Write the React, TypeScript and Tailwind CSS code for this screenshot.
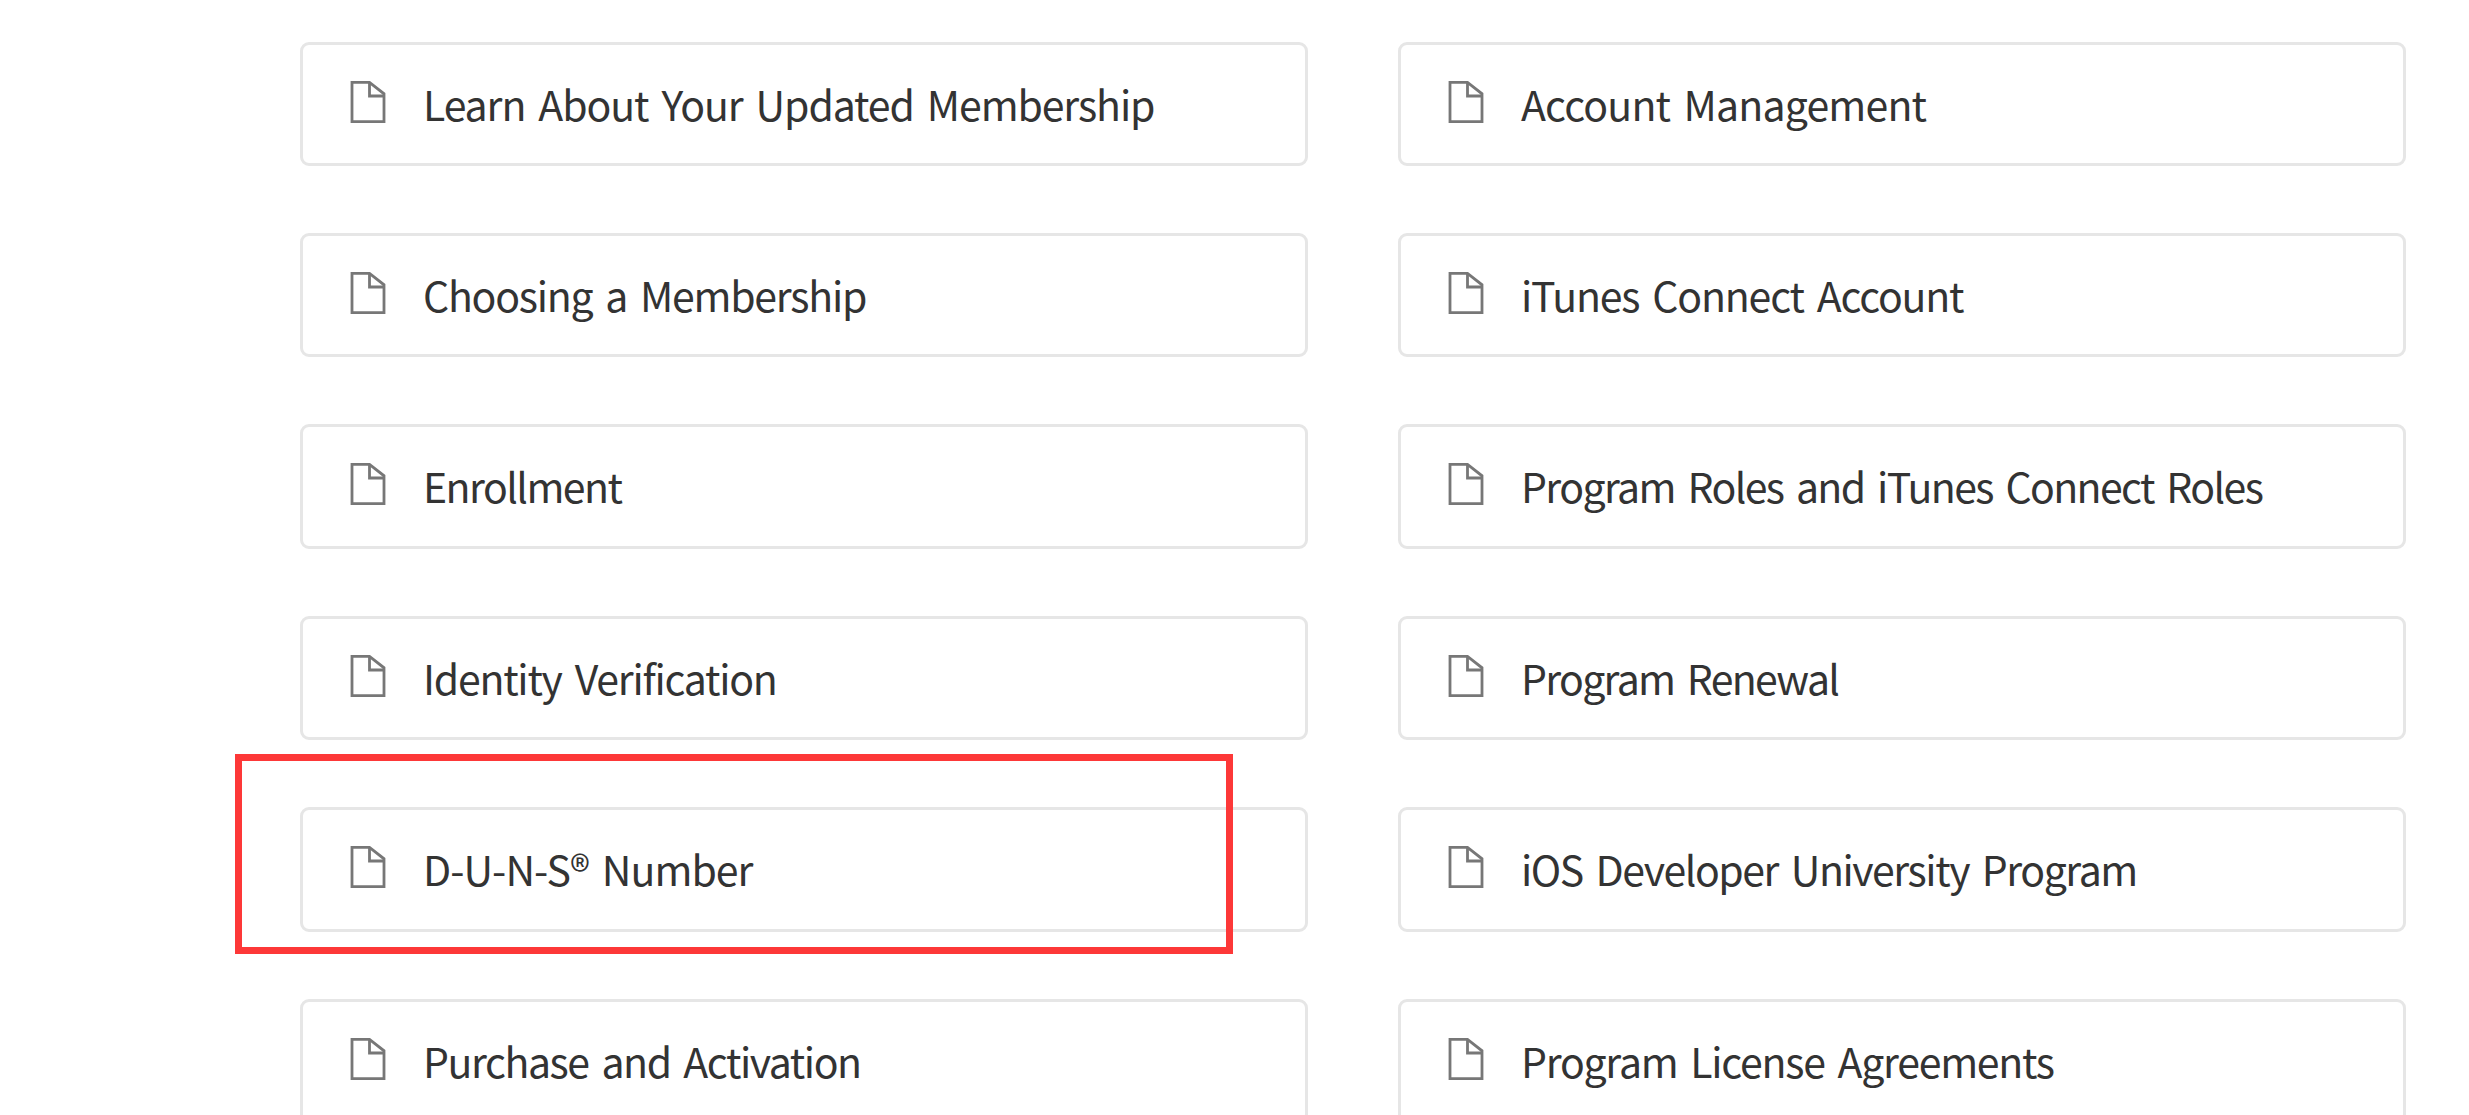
interface Topic {
  title: string;
  tracking: string;
}

const leftTopics: Topic[] = [
  { title: "Learn About Your Updated Membership", tracking: "tracking-[-1.1px]" },
  { title: "Choosing a Membership", tracking: "tracking-[-1.25px]" },
  { title: "Enrollment", tracking: "tracking-[-1.55px]" },
  { title: "Identity Verification", tracking: "tracking-[-1.25px]" },
  { title: "D-U-N-S® Number", tracking: "tracking-[-0.96px]" },
  { title: "Purchase and Activation", tracking: "tracking-[-1.43px]" },
];

const rightTopics: Topic[] = [
  { title: "Account Management", tracking: "tracking-[-0.82px]" },
  { title: "iTunes Connect Account", tracking: "tracking-[-1.19px]" },
  { title: "Program Roles and iTunes Connect Roles", tracking: "tracking-[-1.62px]" },
  { title: "Program Renewal", tracking: "tracking-[-1.7px]" },
  { title: "iOS Developer University Program", tracking: "tracking-[-1.45px]" },
  { title: "Program License Agreements", tracking: "tracking-[-1.26px]" },
];

function DocumentIcon() {
  return (
    <svg
      width="36"
      height="44"
      viewBox="0 0 36 44"
      fill="none"
      stroke="#777777"
      strokeWidth="2.8"
      className="shrink-0"
    >
      <path d="M2 2.3H19.5L34 13.8V41.6H2Z" />
      <path d="M19.5 2.3V16H34" />
    </svg>
  );
}

function TopicCard({ title, tracking }: Topic) {
  return (
    <a className="flex h-[124.4px] w-[1008px] items-start rounded-[9px] border-3 border-[#e6e6e6] pt-[35px] pl-[47px]">
      <DocumentIcon />
      <span
        className={`-mt-[3px] ml-[37px] text-[41px] leading-[52px] whitespace-nowrap text-[#333333] [word-spacing:5px] ${tracking}`}
      >
        {title}
      </span>
    </a>
  );
}

function TopicColumn({ topics }: { topics: Topic[] }) {
  return (
    <div className="flex flex-col gap-[67px]">
      {topics.map((topic) => (
        <TopicCard key={topic.title} {...topic} />
      ))}
    </div>
  );
}

export default function App() {
  return (
    <main className="relative h-[1115px] w-[2469px] overflow-hidden bg-white font-['Noto_Sans_CJK_SC','Open_Sans',sans-serif]">
      <div className="flex gap-[90px] pt-[41.65px] pl-[300px]">
        <TopicColumn topics={leftTopics} />
        <TopicColumn topics={rightTopics} />
      </div>
      {/* highlight around the D-U-N-S card */}
      <div className="absolute top-[754px] left-[235px] h-[200px] w-[998px] border-7 border-[#fd3838]" />
    </main>
  );
}
